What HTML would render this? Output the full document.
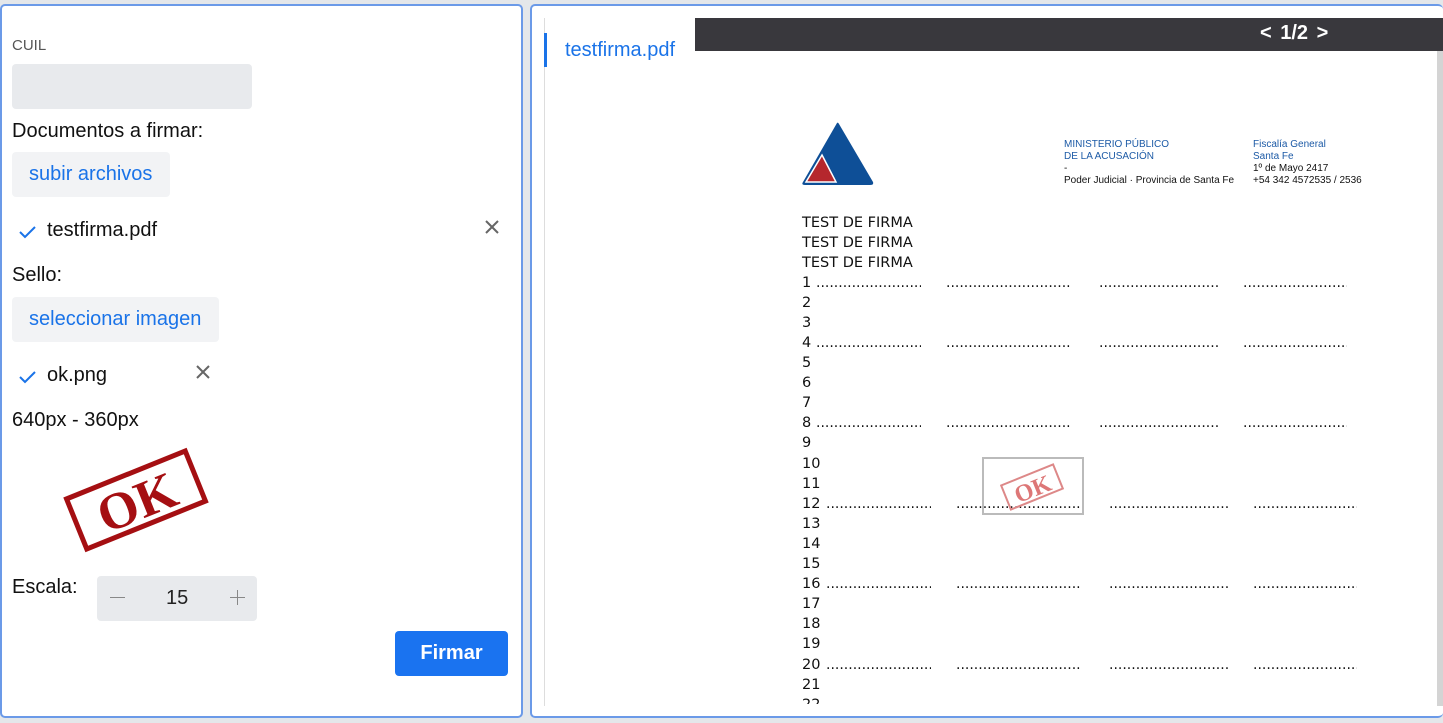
<!DOCTYPE html>
<html><head><meta charset="utf-8"><style>
*{box-sizing:border-box;margin:0;padding:0}
body{width:1443px;height:723px;background:#e4e7ea;font-family:"Liberation Sans",Arial,sans-serif;position:relative;overflow:hidden}
.a{position:absolute}
.panel{position:absolute;background:#fff;border:2px solid #6b9ae8;border-radius:5px}
.btn{position:absolute;background:#f2f3f5;border-radius:4px;color:#1a73e8;font-size:20px;padding-left:17px;line-height:45px}
.pdf{font-family:"DejaVu Sans",sans-serif;font-size:14.5px;color:#111}
.row{position:absolute;left:802px;line-height:20px;white-space:nowrap}
.d{position:absolute;overflow:hidden;white-space:nowrap;font-family:"DejaVu Sans",sans-serif;font-size:14px;letter-spacing:0;line-height:20px}
</style></head><body>
<div class="panel" style="left:0;top:4px;width:523px;height:714px"></div>
<div class="panel" style="left:530px;top:4px;width:913px;height:714px;border-right:none"></div>

<div class="a" style="left:12px;top:37px;font-size:15px;color:#555">CUIL</div>
<div class="a" style="left:12px;top:64px;width:240px;height:45px;background:#e8eaed;border-radius:4px"></div>
<div class="a" style="left:12px;top:120px;font-size:20px;color:#111">Documentos a firmar:</div>
<div class="btn" style="left:12px;top:152px;width:158px;height:45px">subir archivos</div>
<svg class="a" style="left:18px;top:224px" width="20" height="16"><path d="M2 8 L7 13 L17 3" fill="none" stroke="#1a73e8" stroke-width="2"/></svg>
<div class="a" style="left:47px;top:219px;font-size:20px;color:#111">testfirma.pdf</div>
<svg class="a" style="left:485px;top:220px" width="14" height="14"><path d="M1 1L13 13M13 1L1 13" stroke="#666" stroke-width="2"/></svg>
<div class="a" style="left:12px;top:264px;font-size:20px;color:#111">Sello:</div>
<div class="btn" style="left:12px;top:297px;width:207px;height:45px">seleccionar imagen</div>
<svg class="a" style="left:18px;top:369px" width="20" height="16"><path d="M2 8 L7 13 L17 3" fill="none" stroke="#1a73e8" stroke-width="2"/></svg>
<div class="a" style="left:47px;top:364px;font-size:20px;color:#111">ok.png</div>
<svg class="a" style="left:196px;top:365px" width="14" height="14"><path d="M1 1L13 13M13 1L1 13" stroke="#666" stroke-width="2"/></svg>
<div class="a" style="left:12px;top:409px;font-size:20px;color:#111">640px - 360px</div>
<svg class="a" style="left:60px;top:445px" width="152" height="110"><g transform="rotate(-22 76 55)"><rect x="12" y="28" width="128" height="54" fill="none" stroke="#a50f12" stroke-width="5"/><text x="76" y="75" text-anchor="middle" font-family="Liberation Serif,serif" font-weight="bold" font-size="52" fill="#a50f12">OK</text></g></svg>
<div class="a" style="left:12px;top:576px;font-size:20px;color:#111">Escala:</div>
<div class="a" style="left:97px;top:576px;width:160px;height:45px;background:#e8eaed;border-radius:4px"></div>
<div class="a" style="left:110px;top:597px;width:15px;height:1px;background:#888"></div>
<div class="a" style="left:166px;top:587px;font-size:20px;color:#222">15</div>
<div class="a" style="left:230px;top:597px;width:15px;height:1px;background:#888"></div>
<div class="a" style="left:237px;top:590px;width:1px;height:15px;background:#888"></div>
<div class="a" style="left:395px;top:631px;width:113px;height:45px;background:#1a73f0;border-radius:4px;color:#fff;font-weight:bold;font-size:20px;text-align:center;line-height:45px">Firmar</div>

<!-- right -->
<div class="a" style="left:544px;top:18px;width:1px;height:688px;background:#ddd"></div>
<div class="a" style="left:544px;top:33px;width:3px;height:34px;background:#1a73e8"></div>
<div class="a" style="left:565px;top:39px;font-size:20px;color:#1a73e8">testfirma.pdf</div>
<div class="a" style="left:695px;top:18px;width:748px;height:33px;background:#39383d"></div>
<div class="a" style="left:1260px;top:22px;color:#fff;font-weight:bold;font-size:20px;word-spacing:3px">&lt; 1/2 &gt;</div>
<div class="a" style="left:1437px;top:51px;width:6px;height:655px;background:#d4d4d4"></div>

<svg class="a" style="left:800px;top:120px" width="76" height="68"><path d="M37 3 Q38 2 39 4 L73 62 Q74 65 70 65 L5 65 Q1 65 3 62 Z" fill="#0e4f97"/><path d="M22 35 L36 62 L6 62 Z" fill="#b5272d" stroke="#fff" stroke-width="1.5"/></svg>
<div class="a" style="left:1064px;top:139px;font-size:10px;line-height:12px;color:#1c5aa6">MINISTERIO PÚBLICO<br>DE LA ACUSACIÓN</div>
<div class="a" style="left:1064px;top:163px;font-size:10px;line-height:12px;color:#111">-<br>Poder Judicial · Provincia de Santa Fe</div>
<div class="a" style="left:1253px;top:139px;font-size:10px;line-height:12px;color:#1c5aa6">Fiscalía General<br>Santa Fe</div>
<div class="a" style="left:1253px;top:163px;font-size:10px;line-height:12px;color:#111">1º de Mayo 2417<br>+54 342 4572535 / 2536</div>

<div class="a pdf" style="left:0;top:0;width:1437px;height:704px;overflow:hidden">
<div class="row" style="top:213px">TEST DE FIRMA</div>
<div class="row" style="top:233px">TEST DE FIRMA</div>
<div class="row" style="top:253px">TEST DE FIRMA</div>
<div class="row" style="top:273px">1</div><div class="row" style="top:293px">2</div><div class="row" style="top:313px">3</div><div class="row" style="top:333px">4</div><div class="row" style="top:353px">5</div><div class="row" style="top:373px">6</div><div class="row" style="top:393px">7</div><div class="row" style="top:413px">8</div><div class="row" style="top:433px">9</div><div class="row" style="top:454px">10</div><div class="row" style="top:474px">11</div><div class="row" style="top:494px">12</div><div class="row" style="top:514px">13</div><div class="row" style="top:534px">14</div><div class="row" style="top:554px">15</div><div class="row" style="top:574px">16</div><div class="row" style="top:594px">17</div><div class="row" style="top:614px">18</div><div class="row" style="top:634px">19</div><div class="row" style="top:655px">20</div><div class="row" style="top:675px">21</div><div class="row" style="top:695px">22</div>
<div class="d" style="left:816px;top:273px;width:105px">..................................</div><div class="d" style="left:946px;top:273px;width:124px">..........................................</div><div class="d" style="left:1099px;top:273px;width:120px">..........................................</div><div class="d" style="left:1243px;top:273px;width:104px">..................................</div>
<div class="d" style="left:816px;top:333px;width:105px">..................................</div><div class="d" style="left:946px;top:333px;width:124px">..........................................</div><div class="d" style="left:1099px;top:333px;width:120px">..........................................</div><div class="d" style="left:1243px;top:333px;width:104px">..................................</div>
<div class="d" style="left:816px;top:413px;width:105px">..................................</div><div class="d" style="left:946px;top:413px;width:124px">..........................................</div><div class="d" style="left:1099px;top:413px;width:120px">..........................................</div><div class="d" style="left:1243px;top:413px;width:104px">..................................</div>
<div class="d" style="left:826px;top:494px;width:105px">..................................</div><div class="d" style="left:956px;top:494px;width:124px">..........................................</div><div class="d" style="left:1109px;top:494px;width:120px">..........................................</div><div class="d" style="left:1253px;top:494px;width:104px">..................................</div>
<div class="d" style="left:826px;top:574px;width:105px">..................................</div><div class="d" style="left:956px;top:574px;width:124px">..........................................</div><div class="d" style="left:1109px;top:574px;width:120px">..........................................</div><div class="d" style="left:1253px;top:574px;width:104px">..................................</div>
<div class="d" style="left:826px;top:655px;width:105px">..................................</div><div class="d" style="left:956px;top:655px;width:124px">..........................................</div><div class="d" style="left:1109px;top:655px;width:120px">..........................................</div><div class="d" style="left:1253px;top:655px;width:104px">..................................</div>
</div>
<div class="a" style="left:982px;top:457px;width:102px;height:58px;border:2px solid #bbb"></div>
<svg class="a" style="left:1000px;top:462px" width="64" height="50"><g transform="rotate(-22 32 25)"><rect x="4" y="12" width="56" height="26" fill="none" stroke="#d88" stroke-width="2"/><text x="32" y="35" text-anchor="middle" font-family="Liberation Serif,serif" font-weight="bold" font-size="24" fill="#d77">OK</text></g></svg>
</body></html>
